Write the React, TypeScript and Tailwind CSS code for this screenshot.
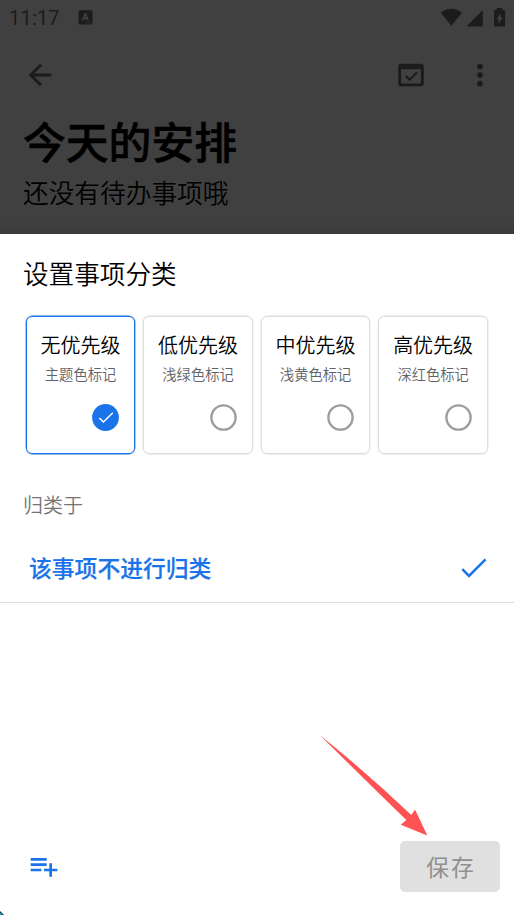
const priorities = [
  { title: '无优先级', note: '主题色标记', selected: true },
  { title: '低优先级', note: '浅绿色标记', selected: false },
  { title: '中优先级', note: '浅黄色标记', selected: false },
  { title: '高优先级', note: '深红色标记', selected: false },
];

function StatusBar() {
  return (
    <div className="flex h-[34px] items-center pl-[9px] pr-[8px] text-[#1c1c1c]">
      <span className="font-['Roboto','Noto_Sans_CJK_SC',sans-serif] text-[20px] leading-[34px] tracking-[0.2px] pt-[2px]">11:17</span>
      <svg className="ml-[18px]" width="15" height="15" viewBox="0 0 15 15">
        <rect x="0.5" y="0.2" width="14" height="14.4" rx="1.5" fill="#1c1c1c" />
        <path d="M4.4 10.5 7.2 3.7h.3l2.8 6.8M5.4 8.4h4" fill="none" stroke="#404040" strokeWidth="1.6" />
        <path d="M7.5 12.8h1.2M9.6 12.8h1.2M11.7 12.8h1.2" stroke="#404040" strokeWidth="1" />
      </svg>
      <svg className="mb-[1px] ml-auto" width="66" height="20" viewBox="0 0 66 20" fill="#1c1c1c">
        <path d="M0.8 5.8C3.6 3 7.5 1.7 11.3 1.7S19 3 22 5.8L11.3 18.8z" />
        <path d="M26.3 19.6 42.8 3v15.2q0 1.4-1.4 1.4z" />
        <path d="M56.6 3H54.9q-.9 0-.9.9v14.8q0 .9.9.9h9.3q.9 0 .9-.9V3.9q0-.9-.9-.9h-1.9V1.1h-5.7z" />
        <path d="M60.6 6.4v4.2h2L58.5 17v-4.8h-2z" fill="#404040" />
      </svg>
    </div>
  );
}

function Toolbar() {
  return (
    <div className="flex h-[81px] items-center pl-[22.5px] pr-[17.5px] text-[#1a1b1d]">
      <svg width="34" height="34" viewBox="0 0 24 24" fill="currentColor">
        <path d="M20 11H7.83l5.59-5.59L12 4l-8 8 8 8 1.41-1.41L7.83 13H20v-2z" />
      </svg>
      <svg className="ml-auto" width="34" height="34" viewBox="0 0 24 24" fill="currentColor">
        <path fillRule="evenodd" d="M5 4h14a2 2 0 0 1 2 2v12a2 2 0 0 1-2 2H5a2 2 0 0 1-2-2V6a2 2 0 0 1 2-2zm0 4v10h14V8z" />
        <path d="m8.3 12.7 2.7 2.7 5.2-5.2" fill="none" stroke="currentColor" strokeWidth="1.5" />
      </svg>
      <svg className="ml-[34.5px]" width="34" height="34" viewBox="0 0 24 24" fill="currentColor">
        <circle cx="12" cy="6" r="2" />
        <circle cx="12" cy="12" r="2" />
        <circle cx="12" cy="18" r="2" />
      </svg>
    </div>
  );
}

function PriorityCard({ title, note, selected }: { title: string; note: string; selected: boolean }) {
  return (
    <div
      className={`flex h-[138px] flex-col items-center rounded-[6px] border ${
        selected ? 'border-[#1a73e8] shadow-[0_0_0_0.4px_#1a73e8]' : 'border-[#dedede] shadow-[0_0_0_0.4px_#dedede]'
      }`}
    >
      <div className="mt-[13px] whitespace-nowrap text-[20px] font-[350] leading-[30px] text-black">{title}</div>
      <div className="mt-[3px] whitespace-nowrap text-[14.3px] font-[350] leading-[22px] text-[#5f6368]">{note}</div>
      <svg className="mr-[15px] mt-[19px] self-end" width="27" height="27" viewBox="0 0 27 27" fill="none">
        {selected ? (
          <>
            <circle cx="13.5" cy="13.5" r="13.4" fill="#1a73e8" />
            <path d="m7.4 14 4 4 9.4-9.3" stroke="#fff" strokeWidth="1.5" />
          </>
        ) : (
          <circle cx="13.5" cy="13.5" r="12.1" stroke="#9e9e9e" strokeWidth="2.4" />
        )}
      </svg>
    </div>
  );
}

export default function App() {
  return (
    <div className="relative flex h-[915px] w-[514px] flex-col overflow-hidden bg-[#404040] font-['Noto_Sans_CJK_SC',sans-serif]">
      <header className="h-[234px] shrink-0 bg-linear-to-b from-[#404040] from-94% to-[#3a3a3a]">
        <StatusBar />
        <Toolbar />
        <h1 className="pl-[23px] text-[42.8px] font-medium leading-[50px] text-black [-webkit-text-stroke:0.6px_#000]">今天的安排</h1>
        <p className="mt-[8px] pl-[23px] text-[25.7px] font-[350] leading-[38px] text-black">还没有待办事项哦</p>
      </header>
      <main className="flex flex-1 flex-col bg-white">
        <h2 className="mt-[20px] pl-[23px] text-[25.6px] font-[350] leading-[38px] text-black">设置事项分类</h2>
        <div className="mt-[24px] grid grid-cols-4 gap-[7.8px] pl-[25.7px] pr-[26px]">
          {priorities.map((item) => (
            <PriorityCard key={item.title} {...item} />
          ))}
        </div>
        <div className="mt-[36px] pl-[23px] text-[20px] font-[350] leading-[30px] text-[#757575]">归类于</div>
        <div className="mt-[14px] flex h-[69px] items-center justify-between border-b border-[#dcdcdc] pl-[29px] pr-[27px] text-[#1a73e8]">
          <span className="text-[22.8px] font-medium leading-[34px] [-webkit-text-stroke:0.2px_#1a73e8]">该事项不进行归类</span>
          <svg width="26" height="20" viewBox="0 0 26 20" fill="none">
            <path d="m1.3 11.2 6.7 6.7L24.5 1.3" stroke="currentColor" strokeWidth="2.5" />
          </svg>
        </div>
        <div className="mb-[23px] mt-auto flex items-center justify-between pl-[28px] pr-[14px]">
          <svg className="mb-[1px]" width="32" height="32" viewBox="0 0 24 24" fill="#1a73e8">
            <path d="M14 10H2v2h12v-2zm0-4H2v2h12V6zm4 8v-4h-2v4h-4v2h4v4h2v-4h4v-2h-4zM2 16h8v-2H2v2z" />
          </svg>
          <button className="flex h-[51px] w-[100px] items-center justify-center rounded-[5px] bg-[#e0e0e0] pl-[2px] text-[22.8px] leading-[34px] tracking-[2px] text-[#909090]">
            保存
          </button>
        </div>
      </main>
      <svg className="absolute left-[319px] top-[734px]" width="110" height="103" viewBox="0 0 110 103">
        <path d="M.8 1Q48 39 92.3 81L96 75.5 108.3 101.5 81.8 90.7 87.3 86Q42 42 .8 1z" fill="#ff5252" />
      </svg>
      <svg className="absolute bottom-0 left-0" width="4" height="4" viewBox="0 0 4 4">
        <path d="M0 0 4 4H0z" fill="#06283a" />
        <path d="M0 1.5 2.5 4H0z" fill="#11a9e0" />
      </svg>
    </div>
  );
}
